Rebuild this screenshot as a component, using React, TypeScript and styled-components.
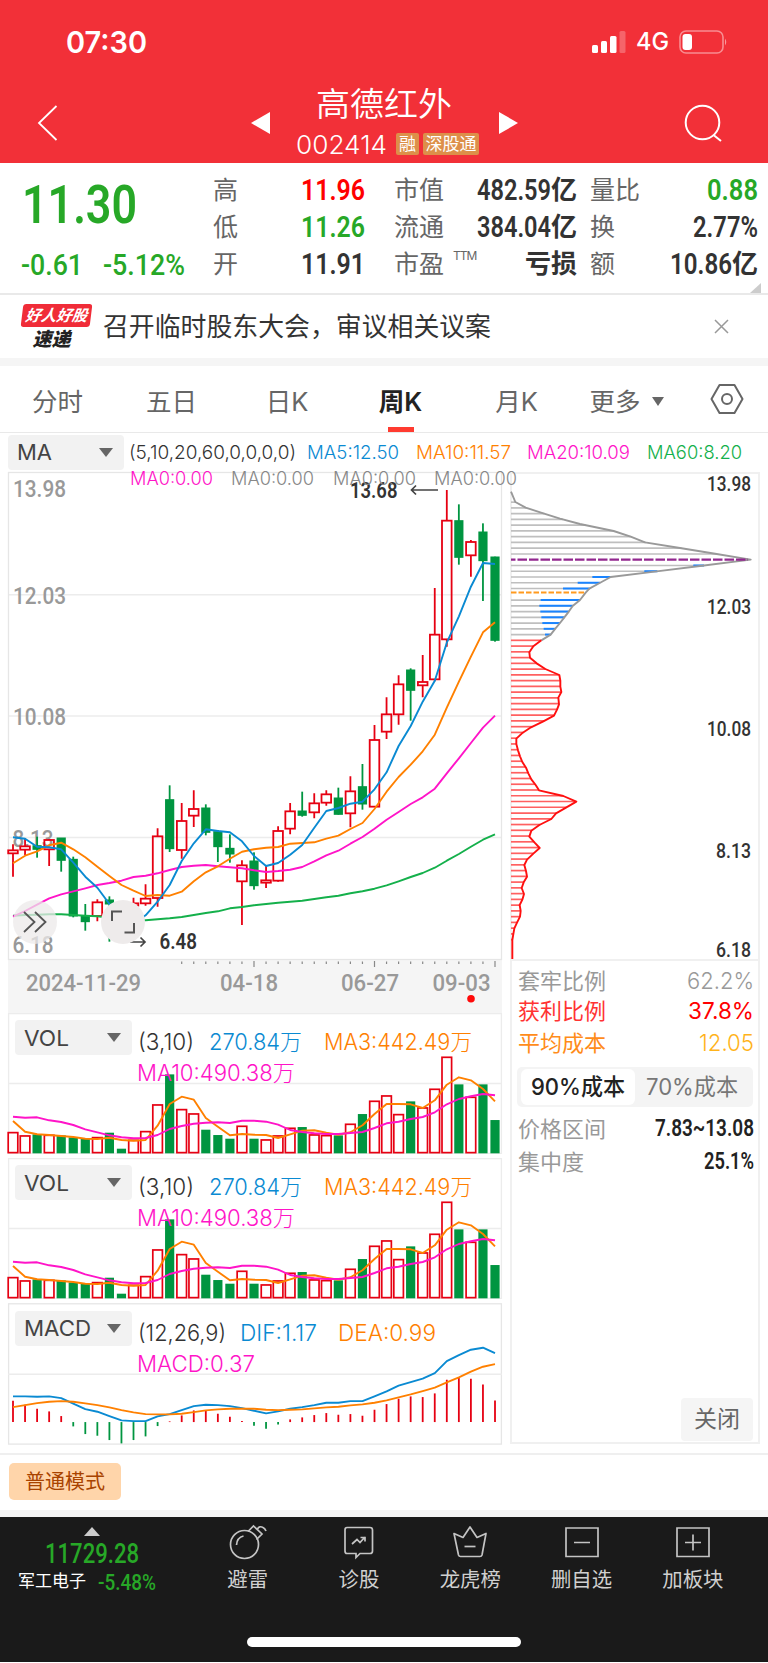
import React, { useLayoutEffect, useRef, useState } from 'react';
import styled, { createGlobalStyle } from 'styled-components';

const UI = `Inter, "Noto Sans CJK SC", sans-serif`;
const DIN = `Roboto, "Noto Sans CJK SC", sans-serif`;

const C = {
  up: '#e60012',
  down: '#009540',
  blue: '#0a8ad2',
  orange: '#ff8000',
  pink: '#ff14c8',
  green: '#14b04b',
  quoteGreen: '#27a827',
  grid: '#ececec',
  dark: '#333',
  grey: '#999',
};

const GlobalStyle = createGlobalStyle`
  * { box-sizing: border-box; }
  body { margin: 0; background: #fff; font-family: ${UI}; }
  svg { display: block; flex: none; overflow: visible; }
`;

/* ---------- text ---------- */

const FitBox = styled.div<{ $w: number; $h: number; $ml: number; $size: number; $color: string; $weight: number; $din?: boolean }>`
  flex: none;
  width: ${p => p.$w}px;
  height: ${p => p.$h}px;
  line-height: ${p => p.$h}px;
  margin-left: ${p => p.$ml}px;
  font-family: ${p => (p.$din ? DIN : UI)};
  font-size: ${p => p.$size}px;
  font-weight: ${p => p.$weight};
  color: ${p => p.$color};
  white-space: nowrap;
`;

const FitInner = styled.span`
  display: inline-block;
  transform-origin: 0 50%;
`;

type FitProps = { w: number; h?: number; ml?: number; size: number; color?: string; weight?: number; din?: boolean; children: React.ReactNode };

/* One line of text condensed or expanded to a given width. */
function Fit({ w, h = 30, ml = 0, size, color = C.dark, weight = 400, din, children }: FitProps) {
  const ref = useRef<HTMLSpanElement>(null);
  const [k, setK] = useState(1);
  useLayoutEffect(() => {
    if (ref.current && ref.current.offsetWidth) setK(w / ref.current.getBoundingClientRect().width * k);
  }, [w]);
  return (
    <FitBox $w={w} $h={h} $ml={ml} $size={size} $color={color} $weight={weight} $din={din}>
      <FitInner ref={ref} style={{ transform: `scaleX(${k})` }}>{children}</FitInner>
    </FitBox>
  );
}

/* ---------- header ---------- */

const Screen = styled.div`
  width: 768px;
  height: 1663px;
  display: flex;
  flex-direction: column;
  background: #fff;
  overflow: hidden;
`;

const Header = styled.header`
  height: 163px;
  background: #f23038;
  flex: none;
`;

const StatusBar = styled.div`
  height: 82px;
  padding: 2px 40px 0 66px;
  display: flex;
  align-items: center;
`;

const StatusRight = styled.div`
  margin-left: auto;
  display: flex;
  align-items: center;
  gap: 10px;
`;

const Nav = styled.div`
  height: 81px;
  padding: 0 46px 0 37px;
  display: flex;
  align-items: center;
`;

const TitleBlock = styled.div`
  width: 184px;
  height: 81px;
  margin: 0 20px 0 25px;
  display: flex;
  flex-direction: column;
`;

const CodeRow = styled.div`
  display: flex;
  align-items: center;
  height: 36px;
`;

const Tag = styled.span<{ $w: number; $ml: number }>`
  width: ${p => p.$w}px;
  height: 22px;
  margin-left: ${p => p.$ml}px;
  border-radius: 2px;
  background: #dd8f49;
  color: #fff;
  font-size: 17px;
  line-height: 22px;
  text-align: center;
  position: relative;
  top: -1px;
`;

const NavTriangle = styled.svg<{ $ml?: number }>`
  width: 19px;
  height: 22px;
  margin-left: ${p => p.$ml ?? 0}px;
  fill: #fff;
`;

const SearchIcon = styled.svg`
  margin-left: auto;
`;

/* ---------- quote ---------- */

const Quote = styled.section`
  position: relative;
  height: 132px;
  flex: none;
  display: flex;
  border-bottom: 2px solid #e9e9e9;
`;

const PriceCol = styled.div`
  width: 213px;
  padding: 15px 0 0 22px;
`;

const ChangeRow = styled.div`
  display: flex;
  margin-top: 13px;
`;

const FactCol = styled.div<{ $w: number; $gap: number }>`
  width: ${p => p.$w}px;
  margin-right: ${p => p.$gap}px;
  padding-top: 9px;
`;

const Fact = styled.div`
  height: 36.7px;
  display: flex;
  align-items: center;
`;

const FactLabel = styled.span`
  font-size: 25px;
  line-height: 30px;
  color: #666;
  margin-right: auto;
  white-space: nowrap;
  sup { font-size: 12px; line-height: 0; vertical-align: 13px; margin-left: 9px; letter-spacing: -1px; }
`;

const Unit = styled.span`
  font-size: 26px;
  line-height: 30px;
  font-weight: 700;
  color: ${C.dark};
`;

const Corner = styled.svg`
  position: absolute;
  right: 7px;
  bottom: 0;
`;

/* ---------- news ---------- */

const News = styled.section`
  height: 71px;
  flex: none;
  border-bottom: 8px solid #f5f5f5;
  padding: 0 39px 0 22px;
  display: flex;
  align-items: center;
`;

const Brand = styled.div`
  width: 69px;
  height: 48px;
  padding-top: 1px;
`;

const BrandTop = styled.div`
  height: 23px;
  border-radius: 3px;
  background: #f02c38;
  color: #fff;
  font-size: 15.5px;
  font-weight: 700;
  font-style: italic;
  line-height: 24px;
  text-align: center;
  transform: skewX(-7deg);
`;

const BrandBottom = styled.div`
  color: #222;
  font-size: 19px;
  font-weight: 900;
  font-style: italic;
  line-height: 25px;
  text-align: center;
  padding-right: 10px;
`;

const CloseIcon = styled.svg`
  margin-left: auto;
`;

/* ---------- tabs ---------- */

const Tabs = styled.nav`
  height: 67px;
  flex: none;
  display: flex;
  padding: 0 24px 0 3px;
  border-bottom: 1px solid #e9e9e9;
`;

const Tab = styled.div<{ $active?: boolean; $w?: number }>`
  width: ${p => p.$w ?? 115}px;
  display: flex;
  align-items: center;
  justify-content: center;
  gap: 11px;
  height: 66px;
  padding-top: 5px;
  font-size: 25.5px;
  line-height: 32px;
  color: ${p => (p.$active ? '#222' : '#666')};
  font-weight: ${p => (p.$active ? 600 : 400)};
  background: ${p => (p.$active ? 'linear-gradient(#ff3b30, #ff3b30) center bottom / 26px 5px no-repeat' : 'none')};
`;

const HexIcon = styled.svg`
  margin: 17px 0 0 auto;
`;

/* ---------- charts ---------- */

const Charts = styled.main`
  position: relative;
  display: flex;
  justify-content: space-between;
  height: 1022px;
  flex: none;
  padding: 2px 8px 0;
  border-bottom: 2px solid #efefef;
`;

const LeftCol = styled.div`
  width: 494px;
  display: flex;
  flex-direction: column;
`;

const MaBar = styled.div`
  display: flex;
  align-items: center;
  height: 37px;
  width: 752px;
  padding-bottom: 3px;
`;

const Select = styled.div<{ $w: number; $pl: number }>`
  flex: none;
  display: flex;
  align-items: center;
  justify-content: space-between;
  width: ${p => p.$w}px;
  height: 35px;
  padding: 0 11px 0 ${p => p.$pl}px;
  border-radius: 4px;
  background: #f2f2f2;
`;

const Caret = styled.i<{ $w: number; $h: number }>`
  width: 0;
  height: 0;
  border-left: ${p => p.$w / 2}px solid transparent;
  border-right: ${p => p.$w / 2}px solid transparent;
  border-top: ${p => p.$h}px solid #666;
`;

const PricePane = styled.div`
  position: relative;
  height: 488px;
`;

const OverLegend = styled.div`
  position: absolute;
  left: 122px;
  top: -8px;
  display: flex;
`;

const RoundButton = styled.div<{ $x: number; $bg: string }>`
  position: absolute;
  left: ${p => p.$x}px;
  bottom: 16px;
  width: 44px;
  height: 44px;
  border-radius: 50%;
  background: ${p => p.$bg};
  display: flex;
  align-items: center;
  justify-content: center;
`;

const DateAxis = styled.div`
  height: 53px;
  background: #f5f5f5;
`;

const SubPane = styled.div<{ $gap: number }>`
  position: relative;
  height: ${p => 145.3 - p.$gap}px;
  margin-bottom: ${p => p.$gap}px;
`;

const PaneArt = styled.svg`
  position: absolute;
  left: 0;
  top: 0;
`;

const PaneHead = styled.div`
  position: relative;
  display: flex;
  padding: 7px 0 0 7px;
`;

const PaneLegend = styled.div`
  padding: 7px 0 0 1px;
`;

const LegendLine = styled.div`
  display: flex;
  height: 31px;
`;

const RightCol = styled.div`
  width: 250px;
  height: 972px;
  margin-top: 37px;
  border: 2px solid #f0f0f0;
  display: flex;
  flex-direction: column;
`;

const ProfilePane = styled.div`
  height: 487px;
  border-bottom: 2px solid #f0f0f0;
  flex: none;
`;

const StatRow = styled.div<{ $h: number }>`
  height: ${p => p.$h}px;
  padding: 0 4px 0 6px;
  display: flex;
  align-items: center;
  justify-content: space-between;
`;

const StatLabel = styled.span<{ $color: string }>`
  font-size: 22px;
  line-height: 30px;
  color: ${p => p.$color};
`;

const Segmented = styled.div`
  width: 236px;
  height: 40px;
  margin: 3px 0 6px 5px;
  padding: 2px 4px;
  border-radius: 5px;
  background: #f4f4f4;
  display: flex;
`;

const Segment = styled.div<{ $active?: boolean }>`
  width: 114px;
  height: 36px;
  border-radius: 6px;
  display: flex;
  align-items: center;
  justify-content: center;
  background: ${p => (p.$active ? '#fff' : 'transparent')};
`;

const CloseButton = styled.button`
  width: 72px;
  height: 43px;
  margin: auto 5px 1px auto;
  border: 0;
  border-radius: 4px;
  background: #f5f5f5;
  color: #666;
  font: 400 23px/43px ${UI};
  padding: 0;
`;

/* ---------- footer ---------- */

const ModeBar = styled.div`
  height: 62px;
  flex: none;
  padding: 8px 9px;
  border-bottom: 7px solid #f5f5f5;
`;

const ModeChip = styled.div`
  width: 112px;
  height: 37px;
  border-radius: 5px;
  background: #ffd5aa;
  color: #a84300;
  font-size: 20px;
  line-height: 38px;
  text-align: center;
`;

const Footer = styled.footer`
  height: 145px;
  flex: none;
  background: #1a1a1a;
  display: flex;
  flex-direction: column;
`;

const FooterRow = styled.div`
  display: flex;
  height: 120px;
`;

const IndexBox = styled.div`
  width: 192px;
  padding-top: 10px;
`;

const IndexUp = styled.i`
  display: block;
  width: 0;
  margin-left: 84px;
  border-left: 8px solid transparent;
  border-right: 8px solid transparent;
  border-bottom: 9px solid #ccc;
`;

const IndexRow = styled.div`
  display: flex;
`;

const Action = styled.div`
  width: 111.3px;
  padding-top: 6px;
  display: flex;
  flex-direction: column;
  align-items: center;
  color: #d0d0d0;
  font-size: 20.4px;
  line-height: 30px;
  svg { margin-bottom: 4px; }
`;

const HomeIndicator = styled.div`
  width: 274px;
  height: 10px;
  border-radius: 5px;
  background: #fff;
  margin: 0 auto;
`;

/* ---------- chart data, pixel rows in thirds ---------- */

type Candle = [0 | 1, number, number, number, number];

const CANDLES: Candle[] = [
  [1, 1153, 1171, 1180, 1250], [1, 1135, 1159, 1169, 1185], [0, 1130, 1157, 1168, 1193], [1, 1138, 1140, 1168, 1218],
  [0, 1134, 1134, 1201, 1235], [0, 1190, 1198, 1368, 1372], [0, 1332, 1367, 1385, 1412], [1, 1318, 1327, 1368, 1384],
  [0, 1309, 1320, 1332, 1445], [0, 1335, 1345, 1380, 1400], [1, 1313, 1330, 1337, 1400], [1, 1273, 1316, 1330, 1337],
  [1, 1105, 1129, 1314, 1340], [0, 976, 1019, 1166, 1176], [1, 1029, 1083, 1170, 1196], [1, 991, 1047, 1067, 1101],
  [0, 1033, 1044, 1117, 1126], [0, 1110, 1115, 1160, 1206], [0, 1123, 1165, 1182, 1208], [1, 1201, 1216, 1264, 1395],
  [0, 1177, 1203, 1277, 1289], [1, 1218, 1261, 1268, 1284], [1, 1099, 1113, 1262, 1265], [1, 1029, 1054, 1106, 1123],
  [0, 995, 1053, 1066, 1070], [1, 1000, 1030, 1057, 1075], [1, 991, 1003, 1028, 1037], [0, 983, 1014, 1063, 1064],
  [1, 949, 994, 1060, 1102], [0, 912, 980, 1032, 1049], [1, 795, 840, 1040, 1041], [1, 712, 763, 815, 837],
  [1, 646, 673, 763, 794], [0, 625, 630, 691, 782], [1, 585, 666, 676, 712], [1, 384, 524, 658, 664],
  [1, 90, 182, 538, 560], [0, 133, 182, 292, 314], [1, 240, 246, 286, 350], [0, 190, 216, 302, 423], [0, 290, 291, 541, 545],
];

const MA5 = [1132, 1136, 1160, 1162, 1168, 1208, 1250, 1283, 1332, 1385, 1392, 1366, 1325, 1275, 1203, 1150, 1108, 1113, 1117, 1144, 1188, 1218, 1209, 1184, 1155, 1103, 1053, 1044, 1031, 1025, 988, 937, 858, 798, 725, 662, 548, 469, 380, 309, 312];
const MA10 = [1210, 1187, 1174, 1156, 1148, 1168, 1192, 1220, 1248, 1275, 1292, 1308, 1305, 1307, 1295, 1264, 1237, 1219, 1196, 1175, 1168, 1163, 1161, 1151, 1149, 1147, 1136, 1127, 1107, 1089, 1047, 995, 951, 914, 874, 824, 743, 665, 590, 517, 487];
const MA20 = [1370, 1353, 1334, 1315, 1303, 1294, 1285, 1275, 1269, 1262, 1251, 1247, 1240, 1230, 1221, 1217, 1215, 1219, 1222, 1225, 1231, 1236, 1233, 1229, 1221, 1204, 1186, 1172, 1151, 1131, 1106, 1079, 1056, 1032, 1012, 986, 940, 895, 849, 803, 767];
const MA60 = [1367, 1365, 1364, 1363, 1363, 1365, 1367, 1369, 1373, 1377, 1380, 1381, 1378, 1375, 1371, 1365, 1359, 1354, 1345, 1341, 1336, 1332, 1328, 1325, 1322, 1317, 1312, 1307, 1300, 1294, 1286, 1276, 1264, 1251, 1239, 1223, 1202, 1182, 1160, 1139, 1123];

const VOL = [577, 587, 584, 585, 587, 593, 597, 592, 579, 627, 600, 574, 494, 404, 508, 521, 570, 586, 597, 558, 597, 599, 587, 564, 562, 584, 586, 587, 552, 523, 483, 467, 523, 485, 503, 447, 351, 434, 471, 434, 541];
const VMA3 = [543, 575, 583, 585, 588, 591, 596, 597, 593, 600, 602, 600, 557, 492, 470, 479, 534, 560, 586, 582, 584, 585, 594, 583, 572, 571, 578, 584, 577, 556, 522, 492, 492, 493, 504, 481, 434, 412, 421, 447, 484];
const VMA10 = [530, 533, 532, 541, 546, 555, 568, 577, 586, 592, 595, 594, 585, 567, 558, 551, 548, 547, 549, 542, 542, 545, 554, 570, 576, 580, 582, 582, 579, 576, 564, 550, 545, 537, 531, 517, 493, 477, 469, 462, 466];

const HIST = [751, 763, 775, 783, 797, 828, 851, 856, 869, 879, 869, 858, 827, 813, 795, 780, 781, 790, 799, 812, 826, 835, 822, 807, 801, 794, 788, 793, 791, 796, 778, 761, 745, 738, 740, 729, 688, 683, 685, 702, 750];
const DIF = [738, 738, 739, 738, 743, 760, 776, 784, 797, 810, 812, 812, 798, 791, 779, 767, 763, 764, 767, 773, 781, 789, 783, 775, 770, 764, 757, 757, 752, 752, 738, 723, 706, 695, 685, 668, 632, 614, 598, 592, 608];
const DEA = [770, 764, 758, 754, 752, 754, 759, 764, 771, 779, 786, 791, 792, 792, 790, 785, 780, 777, 775, 775, 775, 778, 779, 778, 777, 774, 771, 769, 765, 762, 757, 750, 741, 732, 722, 712, 696, 681, 664, 649, 641];

const GREY_EDGE = [[33, 95], [46, 126], [77, 143], [130, 160], [180, 176], [240, 192], [341, 213], [392, 230], [435, 247], [540, 264], [650, 282], [752, 299], [600, 318], [470, 334], [332, 351], [299, 369], [268, 386], [257, 398], [240, 420], [218, 438], [207, 454], [193, 472], [180, 489], [166, 506], [152, 524], [124, 541]];
const RED_EDGE = [[124, 541], [100, 559], [88, 577], [90, 593], [110, 610], [136, 627], [178, 645], [181, 662], [181, 680], [184, 696], [175, 713], [177, 733], [171, 749], [162, 767], [130, 784], [93, 802], [66, 820], [49, 836], [49, 852], [54, 871], [60, 889], [67, 906], [78, 923], [85, 940], [94, 958], [107, 975], [117, 991], [190, 1008], [229, 1025], [198, 1043], [168, 1060], [154, 1077], [118, 1095], [94, 1112], [88, 1130], [104, 1148], [119, 1164], [100, 1181], [81, 1199], [73, 1215], [78, 1233], [81, 1250], [71, 1267], [65, 1284], [72, 1302], [67, 1319], [59, 1335], [62, 1353], [60, 1370], [51, 1388], [43, 1405], [40, 1422], [37, 1440], [37, 1497]];
const BLUE_START: Record<number, number> = { 11: 580, 12: 433, 13: 277, 14: 233, 15: 189, 17: 122, 18: 118, 19: 121, 20: 124, 21: 127, 22: 131, 23: 135 };

const xAt = (i: number) => 5 + i * 12.05;
const line = (v: number[], off: number) => v.map((y, i) => `${xAt(i).toFixed(1)},${(y / 3 - off).toFixed(1)}`).join(' ');

const Trace = styled.polyline`
  fill: none;
  stroke-width: 1.9;
  stroke-linejoin: round;
`;

const SvgText = styled.text<{ $size: number; $weight?: number }>`
  font-family: ${DIN};
  font-size: ${p => p.$size}px;
  font-weight: ${p => p.$weight ?? 500};
`;

function T({ x, y, w, size, fill, weight, children }: { x: number; y: number; w: number; size: number; fill: string; weight?: number; children: string }) {
  return <SvgText x={x} y={y} textLength={w} lengthAdjust="spacingAndGlyphs" $size={size} $weight={weight} fill={fill}>{children}</SvgText>;
}

function PriceChart() {
  const off = 12;
  return (
    <svg width="494" height="488" viewBox="0 0 494 488">
      {[122.7, 244, 365.5].map(y => <line key={y} x1="0" x2="494" y1={y} y2={y} stroke={C.grid} strokeWidth="1.5" />)}
      <rect x="0.5" y="0.5" width="493" height="487" fill="none" stroke="#e6e6e6" strokeWidth="1.3" />
      <T x={5} y={24.5} w={53} size={24} fill={C.grey}>13.98</T>
      <T x={5} y={131.5} w={53} size={24} fill={C.grey}>12.03</T>
      <T x={5} y={253} w={53} size={24} fill={C.grey}>10.08</T>
      <T x={4.5} y={374.5} w={41} size={24} fill={C.grey}>8.13</T>
      <T x={4.5} y={481} w={41} size={24} fill={C.grey}>6.18</T>
      {CANDLES.map(([up, hi, top, bot, lo], i) => {
        const x = xAt(i);
        const [h, t, b, l] = [hi, top, bot, lo].map(v => v / 3 - off);
        return up ? (
          <g key={i} stroke={C.up} strokeWidth="1.8" fill="none">
            <path d={`M${x} ${h}V${t}M${x} ${b}V${l}`} />
            <rect x={x - 4.8} y={t} width="9.6" height={Math.max(b - t, 1)} />
          </g>
        ) : (
          <g key={i} fill={C.down}>
            <rect x={x - 0.9} y={h} width="1.8" height={l - h} />
            <rect x={x - 4.6} y={t - 0.5} width="9.2" height={b - t + 1} />
          </g>
        );
      })}
      <Trace points={line(MA60, off)} stroke={C.green} />
      <Trace points={line(MA20, off)} stroke={C.pink} />
      <Trace points={line(MA10, off)} stroke={C.orange} />
      <Trace points={line(MA5, off)} stroke={C.blue} />
      <T x={342} y={26.3} w={47.5} size={22} fill={C.dark} weight={600}>13.68</T>
      <path d="M430 18H404M408 13.500L403.500 18L408 22.500" stroke="#444" strokeWidth="1.7" fill="none" />
      <T x={151.5} y={477} w={37.5} size={22} fill={C.dark} weight={600}>6.48</T>
      <path d="M122 470H136.500M132.500 465.500L137 470L132.500 474.500" stroke="#444" strokeWidth="1.7" fill="none" />
    </svg>
  );
}

function DateAxisArt() {
  return (
    <svg width="494" height="53" viewBox="0 0 494 53">
      {Array.from({ length: 27 }, (_, k) => k + 14).map(i => {
        const major = i % 10 === 0;
        return <line key={i} x1={xAt(i)} x2={xAt(i)} y1={major ? 1 : 1.5} y2={major ? 7 : 4} stroke="#888" strokeWidth="1.2" />;
      })}
      <T x={18} y={31} w={115} size={24} fill={C.grey}>2024-11-29</T>
      <T x={212} y={31} w={58} size={24} fill={C.grey}>04-18</T>
      <T x={333} y={31} w={58} size={24} fill={C.grey}>06-27</T>
      <T x={424.5} y={31} w={58} size={24} fill={C.grey}>09-03</T>
      <circle cx="463" cy="38.7" r="3.8" fill="#ff0a0a" />
    </svg>
  );
}

function VolumeArt() {
  const off = 73;
  const base = 640 / 3 - off;
  return (
    <PaneArt width="494" height="141" viewBox="0 0 494 141">
      <path d="M0.6 141V0.700H493.400V141M0 70.500H494M0 140.400H494" fill="none" stroke={C.grid} strokeWidth="1.3" />
      {VOL.map((v, i) => {
        const x = xAt(i);
        const y = v / 3 - off;
        return CANDLES[i][0] ? (
          <rect key={i} x={x - 4.8} y={y + 0.3} width="9.6" height={base - y - 1} fill="#fff" stroke={C.up} strokeWidth="1.7" />
        ) : (
          <rect key={i} x={x - 4.6} y={y - 0.3} width="9.2" height={base - y + 0.3} fill={C.down} />
        );
      })}
      <Trace points={line(VMA3, off)} stroke={C.orange} />
      <Trace points={line(VMA10, off)} stroke={C.pink} />
    </PaneArt>
  );
}

function MacdArt() {
  const off = 153.6;
  const base = 815 / 3 - off;
  return (
    <PaneArt width="494" height="142" viewBox="0 0 494 142">
      <rect x="0.6" y="-0.200" width="492.800" height="140.300" fill="none" stroke="#e6e6e6" strokeWidth="1.3" />
      <line x1="0" x2="494" y1="70.2" y2="70.2" stroke={C.grid} strokeWidth="1.5" />
      {HIST.map((v, i) => (
        <line key={i} x1={xAt(i)} x2={xAt(i)} y1={base} y2={v / 3 - off} stroke={v < 815 ? C.up : C.down} strokeWidth="1.8" />
      ))}
      <Trace points={line(DIF, off)} stroke={C.blue} />
      <Trace points={line(DEA, off)} stroke={C.orange} />
    </PaneArt>
  );
}

const edgeAt = (y: number) => {
  const edge = y <= 541 ? GREY_EDGE : RED_EDGE;
  for (let i = 1; i < edge.length; i++) {
    if (edge[i][1] >= y) {
      const [[x0, y0], [x1, y1]] = [edge[i - 1], edge[i]];
      return x0 + ((x1 - x0) * (y - y0)) / (y1 - y0);
    }
  }
  return 37;
};
const px = (v: number) => v / 3 - 12;
const py = (v: number) => v / 3 - 14;
const edgePoints = (e: number[][]) => e.map(([x, y]) => `${px(x)},${py(y)}`).join(' ');

function CostProfile() {
  return (
    <svg width="246" height="485" viewBox="0 0 246 485">
      {Array.from({ length: 77 }, (_, k) => k).filter(k => k !== 10 && k !== 16).map(k => {
        const y = 126.5 + k * 17.27;
        const end = px(edgeAt(Math.min(y, 1490)));
        return (
          <g key={k} strokeWidth="1.7">
            <line x1="-1" x2={end} y1={py(y)} y2={py(y)} stroke={y < 535 ? '#bfbfbf' : '#ff6060'} />
            {BLUE_START[k] && <line x1={px(BLUE_START[k])} x2={end} y1={py(y)} y2={py(y)} stroke="#1a84ff" strokeWidth="2" />}
          </g>
        );
      })}
      <Trace points={edgePoints(GREY_EDGE)} stroke="#999" />
      <Trace points={edgePoints(RED_EDGE)} stroke="#ff0f0f" />
      <line x1="-1" x2="236" y1={py(299)} y2={py(299)} stroke="#92278f" strokeWidth="2.2" strokeDasharray="9.5 2" strokeDashoffset="5" />
      <line x1="-1" x2="74" y1={py(397.5)} y2={py(397.5)} stroke="#ff9a1f" strokeWidth="1.9" strokeDasharray="5.500 2" />
      <T x={195} y={17.3} w={44} size={20.5} fill={C.dark}>13.98</T>
      <T x={195} y={139.7} w={44} size={20.5} fill={C.dark}>12.03</T>
      <T x={195} y={262} w={44} size={20.5} fill={C.dark}>10.08</T>
      <T x={204} y={384} w={35} size={20.5} fill={C.dark}>8.13</T>
      <T x={204} y={482.5} w={35} size={20.5} fill={C.dark}>6.18</T>
    </svg>
  );
}

function VolumePane() {
  return (
    <SubPane $gap={4}>
      <VolumeArt />
      <PaneHead>
        <Select $w={117} $pl={9}>
          <Fit w={45} size={22} color="#444">VOL</Fit>
          <Caret $w={14} $h={9} />
        </Select>
        <PaneLegend>
          <LegendLine>
            <Fit ml={5} w={56} size={22.5} weight={300}>(3,10)</Fit>
            <Fit ml={15} w={93} size={22.5} weight={300} color={C.blue}>270.84万</Fit>
            <Fit ml={22} w={148} size={22.5} weight={300} color={C.orange}>MA3:442.49万</Fit>
          </LegendLine>
          <LegendLine>
            <Fit ml={4} w={158} size={22.5} weight={300} color={C.pink}>MA10:490.38万</Fit>
          </LegendLine>
        </PaneLegend>
      </PaneHead>
    </SubPane>
  );
}

/* ---------- page ---------- */

const stroke = { fill: 'none', stroke: '#c4c4c4', strokeWidth: 1.7 } as const;

export default function App() {
  return (
    <Screen>
      <GlobalStyle />
      <Header>
        <StatusBar>
          <Fit w={81} size={30} weight={600} color="#fff">07:30</Fit>
          <StatusRight>
            <svg width="34" height="22" viewBox="0 0 34 22" fill="#fff">
              <rect x="0" y="14" width="6" height="8" rx="1.5" />
              <rect x="9" y="10" width="6" height="12" rx="1.5" />
              <rect x="18" y="5" width="6.5" height="17" rx="1.5" />
              <rect x="27.500" y="0" width="6" height="22" rx="1.5" opacity=".25" />
            </svg>
            <Fit w={33} size={24} weight={500} color="#fff">4G</Fit>
            <svg width="49" height="24" viewBox="0 0 49 24">
              <rect x="1" y="1" width="43" height="22" rx="6" fill="none" stroke="#fff" strokeOpacity=".45" strokeWidth="1.6" />
              <rect x="3.500" y="4" width="9.500" height="16" rx="3" fill="#fff" />
              <path d="M46 8.500Q48.500 12 46 15.500Z" fill="#fff" fillOpacity=".5" />
            </svg>
          </StatusRight>
        </StatusBar>
        <Nav>
          <svg width="21" height="36" viewBox="0 0 21 36"><path d="M19.500 1L2 18L19.500 35" fill="none" stroke="#fff" strokeWidth="1.8" /></svg>
          <NavTriangle $ml={193} viewBox="0 0 19 22"><path d="M0 11L19 0V22Z" /></NavTriangle>
          <TitleBlock>
            <Fit ml={21} w={136} h={45} size={33.5} weight={350} color="#fff">高德红外</Fit>
            <CodeRow>
              <Fit ml={1} w={91} h={36} size={26} weight={350} color="#fff">002414</Fit>
              <Tag $w={23} $ml={9}>融</Tag>
              <Tag $w={56} $ml={4}>深股通</Tag>
            </CodeRow>
          </TitleBlock>
          <NavTriangle viewBox="0 0 19 22"><path d="M19 11L0 0V22Z" /></NavTriangle>
          <SearchIcon width="38" height="38" viewBox="0 0 38 38" fill="none" stroke="#fff" strokeWidth="2">
            <circle cx="18.500" cy="18.500" r="16.800" />
            <path d="M29.500 31L37 37" />
          </SearchIcon>
        </Nav>
      </Header>

      <Quote>
        <PriceCol>
          <Fit w={115} h={54} size={54} weight={600} color={C.quoteGreen} din>11.30</Fit>
          <ChangeRow>
            <Fit ml={-1} w={62} h={40} size={30} weight={500} color={C.quoteGreen} din>-0.61</Fit>
            <Fit ml={20} w={82} h={40} size={30} weight={500} color={C.quoteGreen} din>-5.12%</Fit>
          </ChangeRow>
        </PriceCol>
        <FactCol $w={152} $gap={29}>
          <Fact><FactLabel>高</FactLabel><Fit w={64} size={29} weight={600} color="#f00" din>11.96</Fit></Fact>
          <Fact><FactLabel>低</FactLabel><Fit w={64} size={29} weight={600} color={C.quoteGreen} din>11.26</Fit></Fact>
          <Fact><FactLabel>开</FactLabel><Fit w={64} size={29} weight={600} din>11.91</Fit></Fact>
        </FactCol>
        <FactCol $w={183} $gap={13}>
          <Fact><FactLabel>市值</FactLabel><Fit w={74} size={29} weight={600} din>482.59</Fit><Unit>亿</Unit></Fact>
          <Fact><FactLabel>流通</FactLabel><Fit w={74} size={29} weight={600} din>384.04</Fit><Unit>亿</Unit></Fact>
          <Fact><FactLabel>市盈<sup>TTM</sup></FactLabel><Unit>亏损</Unit></Fact>
        </FactCol>
        <FactCol $w={168} $gap={0}>
          <Fact><FactLabel>量比</FactLabel><Fit w={51} size={29} weight={600} color={C.quoteGreen} din>0.88</Fit></Fact>
          <Fact><FactLabel>换</FactLabel><Fit w={65} size={29} weight={600} din>2.77%</Fit></Fact>
          <Fact><FactLabel>额</FactLabel><Fit w={62} size={29} weight={600} din>10.86</Fit><Unit>亿</Unit></Fact>
        </FactCol>
        <Corner width="11" height="10" viewBox="0 0 11 10"><path d="M11 0V10H0Z" fill="#ccc" /></Corner>
      </Quote>

      <News>
        <Brand>
          <BrandTop>好人好股</BrandTop>
          <BrandBottom>速递</BrandBottom>
        </Brand>
        <Fit ml={12} w={388} size={25.8}>召开临时股东大会，审议相关议案</Fit>
        <CloseIcon width="15" height="15" viewBox="0 0 15 15"><path d="M1 1L14 14M14 1L1 14" stroke="#999" strokeWidth="1.5" /></CloseIcon>
      </News>

      <Tabs>
        <Tab $w={109}>分时</Tab>
        <Tab $w={119}>五日</Tab>
        <Tab $w={112}>日K</Tab>
        <Tab $active $w={115}>周K</Tab>
        <Tab $w={117}>月K</Tab>
        <Tab $w={103}>更多<Caret $w={12} $h={9} /></Tab>
        <HexIcon width="34" height="32" viewBox="0 0 34 32" fill="none" stroke="#666" strokeWidth="2">
          <path d="M9.500 2H24.500L32.500 16L24.500 30H9.500L1.500 16Z" strokeLinejoin="round" />
          <circle cx="17" cy="16" r="5" />
        </HexIcon>
      </Tabs>

      <Charts>
        <LeftCol>
          <MaBar>
            <Select $w={116} $pl={9}>
              <Fit w={35} size={22} color="#444">MA</Fit>
              <Caret $w={14} $h={9} />
            </Select>
            <Fit ml={5} w={167} size={18.5} weight={350}>(5,10,20,60,0,0,0,0)</Fit>
            <Fit ml={11} w={92} size={18.5} color={C.blue} weight={350}>MA5:12.50</Fit>
            <Fit ml={17} w={95} size={18.5} color={C.orange} weight={350}>MA10:11.57</Fit>
            <Fit ml={16} w={103} size={18.5} color={C.pink} weight={350}>MA20:10.09</Fit>
            <Fit ml={17} w={95} size={18.5} color={C.green} weight={350}>MA60:8.20</Fit>
          </MaBar>
          <PricePane>
            <PriceChart />
            <OverLegend>
              <Fit w={83} size={18} color={C.pink} weight={350}>MA0:0.00</Fit>
              <Fit ml={18} w={83} size={18} color="#888" weight={300}>MA0:0.00</Fit>
              <Fit ml={18.5} w={83} size={18} color="#888" weight={300}>MA0:0.00</Fit>
              <Fit ml={18.5} w={83} size={18} color="#888" weight={300}>MA0:0.00</Fit>
            </OverLegend>
            <RoundButton $x={5} $bg="rgba(236,234,234,.75)">
              <svg width="24" height="22" viewBox="0 0 24 22" fill="none" stroke="#555" strokeWidth="1.8"><path d="M1 1L11.500 11L1 21M12 1L22.500 11L12 21" /></svg>
            </RoundButton>
            <RoundButton $x={93} $bg="#eeebeb">
              <svg width="24" height="24" viewBox="0 0 24 24" fill="none" stroke="#555" strokeWidth="2"><path d="M1 11V1.500H11M13.500 22.500H23V13" /></svg>
            </RoundButton>
          </PricePane>
          <DateAxis><DateAxisArt /></DateAxis>
          <VolumePane />
          <VolumePane />
          <SubPane $gap={3}>
            <MacdArt />
            <PaneHead>
              <Select $w={117} $pl={9}>
                <Fit w={67} size={22} color="#444">MACD</Fit>
                <Caret $w={14} $h={9} />
              </Select>
              <PaneLegend>
                <LegendLine>
                  <Fit ml={5} w={88} size={22.5} weight={300}>(12,26,9)</Fit>
                  <Fit ml={14} w={77} size={22.5} weight={300} color={C.blue}>DIF:1.17</Fit>
                  <Fit ml={21} w={98} size={22.5} weight={300} color={C.orange}>DEA:0.99</Fit>
                </LegendLine>
                <LegendLine>
                  <Fit ml={4} w={118} size={22.5} weight={300} color={C.pink}>MACD:0.37</Fit>
                </LegendLine>
              </PaneLegend>
            </PaneHead>
          </SubPane>
        </LeftCol>
        <RightCol>
          <ProfilePane><CostProfile /></ProfilePane>
          <StatRow $h={39}><StatLabel $color="#999">套牢比例</StatLabel><Fit w={67} size={23} color="#999" weight={300}>62.2%</Fit></StatRow>
          <StatRow $h={21}><StatLabel $color="#f33">获利比例</StatLabel><Fit w={66} size={23} color="#f00">37.8%</Fit></StatRow>
          <StatRow $h={43}><StatLabel $color="#ff8c1a">平均成本</StatLabel><Fit w={55} size={23} color="#ffb31a" weight={300}>12.05</Fit></StatRow>
          <Segmented>
            <Segment $active><Fit w={94} size={22.5} weight={500} color="#222">90%成本</Fit></Segment>
            <Segment><Fit w={92} size={22.5} color="#777">70%成本</Fit></Segment>
          </Segmented>
          <StatRow $h={32}><StatLabel $color="#999">价格区间</StatLabel><Fit w={99} size={23} weight={600} color="#222" din>7.83~13.08</Fit></StatRow>
          <StatRow $h={34}><StatLabel $color="#999">集中度</StatLabel><Fit w={50} size={23} weight={600} color="#222" din>25.1%</Fit></StatRow>
          <CloseButton>关闭</CloseButton>
        </RightCol>
      </Charts>

      <ModeBar><ModeChip>普通模式</ModeChip></ModeBar>

      <Footer>
        <FooterRow>
          <IndexBox>
            <IndexUp />
            <Fit ml={45} w={94} h={36} size={27} weight={500} color={C.quoteGreen} din>11729.28</Fit>
            <IndexRow>
              <Fit ml={18} w={68} size={17} h={19} color="#fff">军工电子</Fit>
              <Fit ml={12} w={58} size={22} h={21} weight={500} color={C.quoteGreen} din>-5.48%</Fit>
            </IndexRow>
          </IndexBox>
          <Action>
            <svg width="38" height="38" viewBox="0 0 38 38" {...stroke}>
              <circle cx="15.500" cy="21.500" r="14" />
              <path d="M7.500 22Q8 14.500 14.500 13M19 8.500L24.500 3L33 11L27.500 16.500M28.500 6Q30.500 2.500 34 4.500Q36 5.500 37 8" />
            </svg>
            避雷
          </Action>
          <Action>
            <svg width="38" height="38" viewBox="0 0 38 38" {...stroke}>
              <path d="M7 4.500H30Q32.500 4.500 32.500 7V28Q32.500 30.500 30 30.500H20L16 34.500V30.500H7Q5 30.500 5 28V7Q5 4.500 7 4.500Z" />
              <path d="M12 21L17 16.500L20 19.500L25 14M20.500 14.500H25V18.500" />
            </svg>
            诊股
          </Action>
          <Action>
            <svg width="38" height="38" viewBox="0 0 38 38" {...stroke} strokeLinejoin="round">
              <path d="M3 10.500L12 14.500L19 4L26 14.500L35 10.500L31 32Q30.500 33.500 29 33.500H9.500Q8 33.500 7.500 32Z" />
              <path d="M13.500 23.500H24.500" />
            </svg>
            龙虎榜
          </Action>
          <Action>
            <svg width="38" height="38" viewBox="0 0 38 38" {...stroke}><path d="M3 5H35V33.500H3ZM11 19.500H27" /></svg>
            删自选
          </Action>
          <Action>
            <svg width="38" height="38" viewBox="0 0 38 38" {...stroke}><path d="M3 5H35V33.500H3ZM11 19.500H27M19 11.500V27.500" /></svg>
            加板块
          </Action>
        </FooterRow>
        <HomeIndicator />
      </Footer>
    </Screen>
  );
}
